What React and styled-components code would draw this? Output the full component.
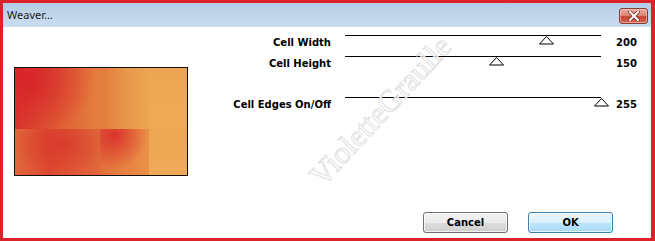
import React from 'react';
import styled, { createGlobalStyle } from 'styled-components';

const GlobalStyle = createGlobalStyle`
  html, body {
    margin: 0;
    padding: 0;
    background: #ffffff;
  }
  #root {
    width: 655px;
    height: 241px;
  }
`;

const Window = styled('div')`
  box-sizing: border-box;
  width: 655px;
  height: 241px;
  border: 3px solid #da2329;
  border-right-width: 4px;
  background: #ffffff;
  display: flex;
  flex-direction: column;
  overflow: hidden;
`;

const TitleBar = styled('div')`
  height: 24px;
  flex: none;
  display: flex;
  align-items: center;
  justify-content: space-between;
  padding: 0 3px 0 4px;
  background: linear-gradient(#b4cce5, #c3d7ec 60%, #cbddef);
`;

const Title = styled('span')`
  font-family: "Noto Sans", "DejaVu Sans", sans-serif;
  font-size: 11px;
  color: #1b1b1b;
  margin-top: -1px;
`;

const CloseButton = styled('div')`
  width: 29px;
  height: 16px;
  margin-top: 2px;
  box-sizing: border-box;
  border: 1px solid #8a3b33;
  border-radius: 3px;
  background: linear-gradient(#e9a99b, #dd8a78 45%, #c8412f 55%, #d2695a);
  box-shadow: inset 0 0 0 1px rgba(255, 220, 210, 0.5);
  display: flex;
  align-items: center;
  justify-content: center;
`;

const Body = styled('div')`
  flex: 1;
  position: relative;
  display: flex;
  flex-direction: column;
`;

const Main = styled('div')`
  display: flex;
  align-items: flex-start;
  padding-top: 3px;
`;

const Preview = styled('div')`
  margin: 37px 0 0 11px;
  width: 172px;
  display: grid;
  grid-template-columns: 85px 49px 38px;
  grid-template-rows: 61px 46px;
  border: 1px solid #111111;
`;

const Cell = styled('div')`
  background: ${({ fill }) => fill};
`;

const Controls = styled('div')`
  display: flex;
  flex-direction: column;
`;

const SliderRow = styled('div')`
  display: grid;
  grid-template-columns: 157px 256px auto;
  height: 21px;
  margin-top: ${({ gap }) => (gap ? '20px' : '0')};
`;

const Label = styled('div')`
  font-family: "DejaVu Sans", Tahoma, sans-serif;
  font-weight: bold;
  font-size: 10px;
  line-height: 13px;
  color: #000000;
  text-align: right;
  padding: 6px 14px 0 0;
  white-space: nowrap;
`;

const Track = styled('div')`
  position: relative;
  margin-top: 5px;
  height: 0;
  border-top: 1px solid #000000;
`;

const Thumb = styled('svg')`
  position: absolute;
  top: 0;
  width: 15px;
  height: 9px;
  margin-left: -7px;
`;

const Value = styled('div')`
  font-family: "DejaVu Sans", Tahoma, sans-serif;
  font-weight: bold;
  font-size: 10px;
  line-height: 13px;
  color: #000000;
  padding: 6px 0 0 15px;
`;

const Footer = styled('div')`
  margin-top: auto;
  display: flex;
  justify-content: flex-end;
  gap: 20px;
  padding: 0 38px 5px 0;
`;

const Button = styled('div')`
  box-sizing: border-box;
  width: 85px;
  height: 21px;
  border: 1px solid ${({ primary }) => (primary ? '#3c7fb1' : '#707070')};
  border-radius: 3px;
  background: ${({ primary }) =>
    primary
      ? 'linear-gradient(#eaf6fd, #d9f0fc 50%, #bee6fd 50%, #a7d9f5)'
      : 'linear-gradient(#f2f2f2, #ebebeb 50%, #dddddd 50%, #cfcfcf)'};
  box-shadow: inset 0 0 0 1px rgba(255, 255, 255, 0.7);
  display: flex;
  align-items: center;
  justify-content: center;
  font-family: "DejaVu Sans", Tahoma, sans-serif;
  font-weight: bold;
  font-size: 10px;
  color: #000000;
`;

const Watermark = styled('div')`
  position: absolute;
  left: 282px;
  top: 66px;
  font-family: "Liberation Serif", "DejaVu Serif", serif;
  font-size: 31px;
  color: rgba(255, 255, 255, 0.7);
  -webkit-text-stroke: 1px #e2e2e2;
  transform: rotate(-47deg);
  transform-origin: center;
  white-space: nowrap;
  pointer-events: none;
`;

const MAX = 255;

const sliders = [
  { label: 'Cell Width', value: 200 },
  { label: 'Cell Height', value: 150 },
  { label: 'Cell Edges On/Off', value: 255, gap: true },
];

const cells = [
  'radial-gradient(ellipse 70px 60px at 10px 10px, #d8232a, rgba(216,35,42,0) 100%), linear-gradient(90deg, #d9362c, #de5a34 45%, #e4803f)',
  'linear-gradient(90deg, #e27a3c, #e99a4b 60%, #eca552)',
  'linear-gradient(#eda553, #eea957)',
  'radial-gradient(ellipse 45px 32px at 45px 15px, rgba(216,54,43,0.8), rgba(216,54,43,0) 100%), linear-gradient(90deg, #e0673a, #dd4a30 40%, #e0683b)',
  'radial-gradient(ellipse 34px 34px at 14px 6px, rgba(216,40,42,0.85), rgba(216,40,42,0) 100%), linear-gradient(90deg, #e36f3b, #ea9247)',
  'linear-gradient(#eda552, #eeaa58)',
];

const Slider = ({ label, value, gap }) => (
  <SliderRow gap={gap}>
    <Label>{label}</Label>
    <Track>
      <Thumb style={{ left: `${(value / MAX) * 256}px` }} viewBox="0 0 15 9">
        <polygon points="7.5,0.5 14.5,8 0.5,8" fill="#ffffff" stroke="#000000" strokeWidth="1" />
      </Thumb>
    </Track>
    <Value>{value}</Value>
  </SliderRow>
);

export default function App() {
  return (
    <>
      <GlobalStyle />
      <Window>
        <TitleBar>
          <Title>Weaver...</Title>
          <CloseButton>
            <svg width="12" height="10" viewBox="0 0 12 10">
              <path d="M2 1 L10 9 M10 1 L2 9" stroke="#6b2a22" strokeWidth="3.4" strokeLinecap="square" />
              <path d="M2 1 L10 9 M10 1 L2 9" stroke="#ffffff" strokeWidth="2" strokeLinecap="square" />
            </svg>
          </CloseButton>
        </TitleBar>
        <Body>
          <Main>
            <Preview>
              {cells.map((fill, i) => (
                <Cell key={i} fill={fill} />
              ))}
            </Preview>
            <Controls>
              {sliders.map((s) => (
                <Slider key={s.label} {...s} />
              ))}
            </Controls>
          </Main>
          <Footer>
            <Button>Cancel</Button>
            <Button primary>OK</Button>
          </Footer>
          <Watermark>VioletteGraulle</Watermark>
        </Body>
      </Window>
    </>
  );
}
